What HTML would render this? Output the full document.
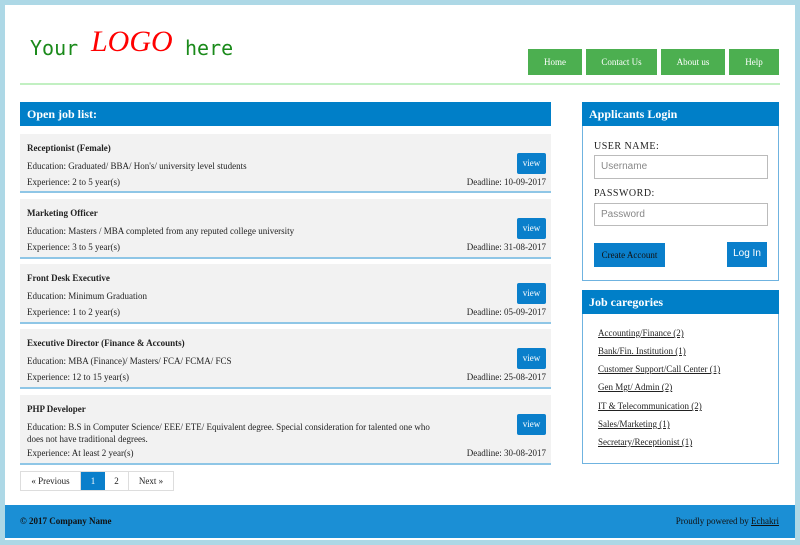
<!DOCTYPE html>
<html><head><style>
*{margin:0;padding:0;box-sizing:border-box}
body{width:800px;height:545px;background:#add8e6;position:relative;font-family:"Liberation Serif",serif;font-size:9px;color:#222;overflow:hidden}
.a{position:absolute}
.page{left:5px;top:5px;width:790px;height:535px;background:#fff}
.nav{top:49px;height:26px;background:#4caf50;color:#fff;text-align:center;line-height:26px;font-size:9px}
.hdr{background:#007fc8;color:#fff;font-weight:bold;font-size:12px;padding-left:7px;line-height:24px}
.card{left:20px;width:531px;background:#f2f2f2;border-bottom:2px solid #8fc6e6}
.card .t{position:absolute;left:7px;top:9px;font-weight:bold}
.card .e{position:absolute;left:7px;top:26px;width:420px;line-height:12px}
.card .x{position:absolute;left:7px}
.card .d{position:absolute;right:5px}
.card .v{position:absolute;right:5px;width:29px;height:21px;background:#0a7fcb;color:#fff;border-radius:2px;text-align:center;line-height:21px}
.lk{left:598px;text-decoration:underline;font-size:9px}
.lg{font-family:'DejaVu Sans Mono',monospace;font-size:20px;color:#1a8a1a;top:36px;white-space:nowrap}
</style></head><body>
<div class="a page"></div>
<div class="a lg" style="left:30px">Your</div>
<div class="a" style="left:91px;top:25px;font-family:'Liberation Serif',serif;font-style:italic;color:#f00;font-size:30px">LOGO</div>
<div class="a lg" style="left:185px">here</div>
<div class="a nav" style="left:528px;width:54px">Home</div>
<div class="a nav" style="left:586px;width:71px">Contact Us</div>
<div class="a nav" style="left:661px;width:64px">About us</div>
<div class="a nav" style="left:729px;width:50px">Help</div>
<div class="a" style="left:20px;top:83px;width:760px;height:2px;background:#c2f0c2"></div>

<div class="a hdr" style="left:20px;top:102px;width:531px;height:24px">Open job list:</div>

<div class="a card" style="top:134px;height:59px"><div class="t">Receptionist (Female)</div><div class="e">Education: Graduated/ BBA/ Hon's/ university level students</div><div class="v" style="top:19px">view</div><div class="x" style="top:43px">Experience: 2 to 5 year(s)</div><div class="d" style="top:43px">Deadline: 10-09-2017</div></div>
<div class="a card" style="top:199px;height:60px"><div class="t">Marketing Officer</div><div class="e">Education: Masters / MBA completed from any reputed college university</div><div class="v" style="top:19px">view</div><div class="x" style="top:43px">Experience: 3 to 5 year(s)</div><div class="d" style="top:43px">Deadline: 31-08-2017</div></div>
<div class="a card" style="top:264px;height:60px"><div class="t">Front Desk Executive</div><div class="e">Education: Minimum Graduation</div><div class="v" style="top:19px">view</div><div class="x" style="top:43px">Experience: 1 to 2 year(s)</div><div class="d" style="top:43px">Deadline: 05-09-2017</div></div>
<div class="a card" style="top:329px;height:60px"><div class="t">Executive Director (Finance &amp; Accounts)</div><div class="e">Education: MBA (Finance)/ Masters/ FCA/ FCMA/ FCS</div><div class="v" style="top:19px">view</div><div class="x" style="top:43px">Experience: 12 to 15 year(s)</div><div class="d" style="top:43px">Deadline: 25-08-2017</div></div>
<div class="a card" style="top:395px;height:70px"><div class="t">PHP Developer</div><div class="e">Education: B.S in Computer Science/ EEE/ ETE/ Equivalent degree. Special consideration for talented one who does not have traditional degrees.</div><div class="v" style="top:19px">view</div><div class="x" style="top:53px">Experience: At least 2 year(s)</div><div class="d" style="top:53px">Deadline: 30-08-2017</div></div>

<div class="a" style="left:20px;top:471px;height:20px;display:flex;border:1px solid #ddd;line-height:18px">
<div style="width:60px;text-align:center;border-right:1px solid #ddd">« Previous</div>
<div style="width:24px;text-align:center;background:#0a7fcb;color:#fff">1</div>
<div style="width:24px;text-align:center;border-right:1px solid #ddd">2</div>
<div style="width:44px;text-align:center">Next »</div></div>

<div class="a" style="left:582px;top:102px;width:197px;height:179px;border:1px solid #6fb3e0"></div>
<div class="a hdr" style="left:582px;top:102px;width:197px;height:24px">Applicants Login</div>
<div class="a" style="left:594px;top:141px;font-size:10px;letter-spacing:.5px">USER NAME:</div>
<div class="a" style="left:594px;top:155px;width:174px;height:24px;border:1px solid #bbb;color:#888;font-family:'Liberation Sans',sans-serif;font-size:10px;padding-left:6px;line-height:22px">Username</div>
<div class="a" style="left:594px;top:188px;font-size:10px;letter-spacing:.5px">PASSWORD:</div>
<div class="a" style="left:594px;top:203px;width:174px;height:23px;border:1px solid #bbb;color:#888;font-family:'Liberation Sans',sans-serif;font-size:10px;padding-left:6px;line-height:21px">Password</div>
<div class="a" style="left:594px;top:243px;width:71px;height:24px;background:#0a7fcb;color:#111;text-align:center;line-height:24px;font-size:9px">Create Account</div>
<div class="a" style="left:727px;top:242px;width:40px;height:25px;background:#0a7fcb;color:#fff;text-align:center;line-height:24px;font-family:'Liberation Sans',sans-serif;font-size:10px">Log In</div>

<div class="a" style="left:582px;top:290px;width:197px;height:174px;border:1px solid #6fb3e0"></div>
<div class="a hdr" style="left:582px;top:290px;width:197px;height:24px">Job caregories</div>
<div class="a lk" style="top:328px">Accounting/Finance (2)</div>
<div class="a lk" style="top:346px">Bank/Fin. Institution (1)</div>
<div class="a lk" style="top:364px">Customer Support/Call Center (1)</div>
<div class="a lk" style="top:382px">Gen Mgt/ Admin (2)</div>
<div class="a lk" style="top:401px">IT &amp; Telecommunication (2)</div>
<div class="a lk" style="top:419px">Sales/Marketing (1)</div>
<div class="a lk" style="top:437px">Secretary/Receptionist (1)</div>

<div class="a" style="left:5px;top:505px;width:790px;height:33px;background:#1b8fd5"></div>
<div class="a" style="left:20px;top:516px;font-weight:bold;color:#111">© 2017 Company Name</div>
<div class="a" style="right:21px;top:516px;color:#111">Proudly powered by <u>Echakri</u></div>
</body></html>
